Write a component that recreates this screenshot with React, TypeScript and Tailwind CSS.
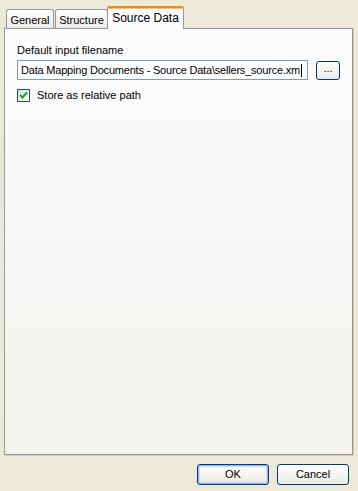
import React from 'react';

function Tab({ label, active, w }: { label: string; active?: boolean; w: string }) {
  if (active) {
    return (
      <div className={'relative z-10 -mb-px -ml-[2px] h-[23px] rounded-t-[3px] border-x border-[#919b9c] bg-[#fcfcfe] pt-[4px] text-center ' + w}>
        <div className="absolute -left-px -right-px top-0 h-[3px] rounded-t-[3px] border-t-2 border-[#e68b2c] bg-[#ffc83c]" />
        <span className="relative top-[-1px] text-[12px]">{label}</span>
      </div>
    );
  }
  return (
    <div className={'h-[19px] rounded-t-[3px] border-x border-t border-[#919b9c] bg-gradient-to-b from-white to-[#ecebe6] pt-[2px] text-center ' + w}>
      {label}
    </div>
  );
}

function XpButton({ label, isDefault }: { label: string; isDefault?: boolean }) {
  return (
    <button
      className={
        'h-[21px] w-[72px] rounded-[3px] border border-[#003c74] bg-gradient-to-b from-white to-[#eceae3] text-[11px] text-black ' +
        (isDefault ? 'shadow-[inset_0_0_0_1px_#9cb7e9,inset_0_0_0_2px_#c7d7f4]' : '')
      }
    >
      {label}
    </button>
  );
}

export default function App() {
  return (
    <div
      className="flex h-[491px] w-[358px] flex-col bg-[#ece9d8] pt-[5px] text-[11px] text-black"
      style={{ fontFamily: '"Liberation Sans", Arial, sans-serif' }}
    >
      {/* Tabs */}
      <div className="flex h-[23px] items-end gap-[1px] pl-[6px]">
        <Tab label="General" w="w-[48px]" />
        <Tab label="Structure" w="w-[53px]" />
        <Tab label="Source Data" w="w-[77px]" active />
      </div>

      {/* Tab panel */}
      <div className="ml-[4px] h-[427px] w-[349px] border border-[#919b9c] bg-gradient-to-b from-[#fcfcfe] to-[#f4f3ee] px-[12px] pt-[15px] shadow-[1px_1px_0_#d0cec3]">
        <div className="leading-[13px]">Default input filename</div>
        <div className="mt-[3px] flex items-center gap-[8px]">
          <div className="flex h-[20px] w-[291px] shrink-0 items-center overflow-hidden whitespace-nowrap border border-[#7f9db9] bg-white pl-[3px] tracking-[-0.2px]">
            Data Mapping Documents - Source Data\sellers_source.xm
            <span className="ml-[1px] inline-block h-[13px] w-[1px] shrink-0 bg-black" />
          </div>
          <button className="h-[19px] w-[26px] rounded-[3px] border border-[#003c74] bg-gradient-to-b from-white to-[#eceae3] pb-[3px] text-[11px] leading-[11px]">
            ...
          </button>
        </div>
        <div className="mt-[7px] flex items-center gap-[7px]">
          <div className="flex h-[13px] w-[13px] items-center justify-center border border-[#1c5180] bg-gradient-to-br from-[#dcdcd7] to-white">
            <svg width="9" height="9" viewBox="0 0 9 9">
              <path d="M1 4 L3.5 6.5 L8 1.5" fill="none" stroke="#21a121" strokeWidth="2" />
            </svg>
          </div>
          <span>Store as relative path</span>
        </div>
      </div>

      {/* Buttons */}
      <div className="mt-[9px] flex justify-end gap-[8px] pr-[9px]">
        <XpButton label="OK" isDefault />
        <XpButton label="Cancel" />
      </div>
    </div>
  );
}
